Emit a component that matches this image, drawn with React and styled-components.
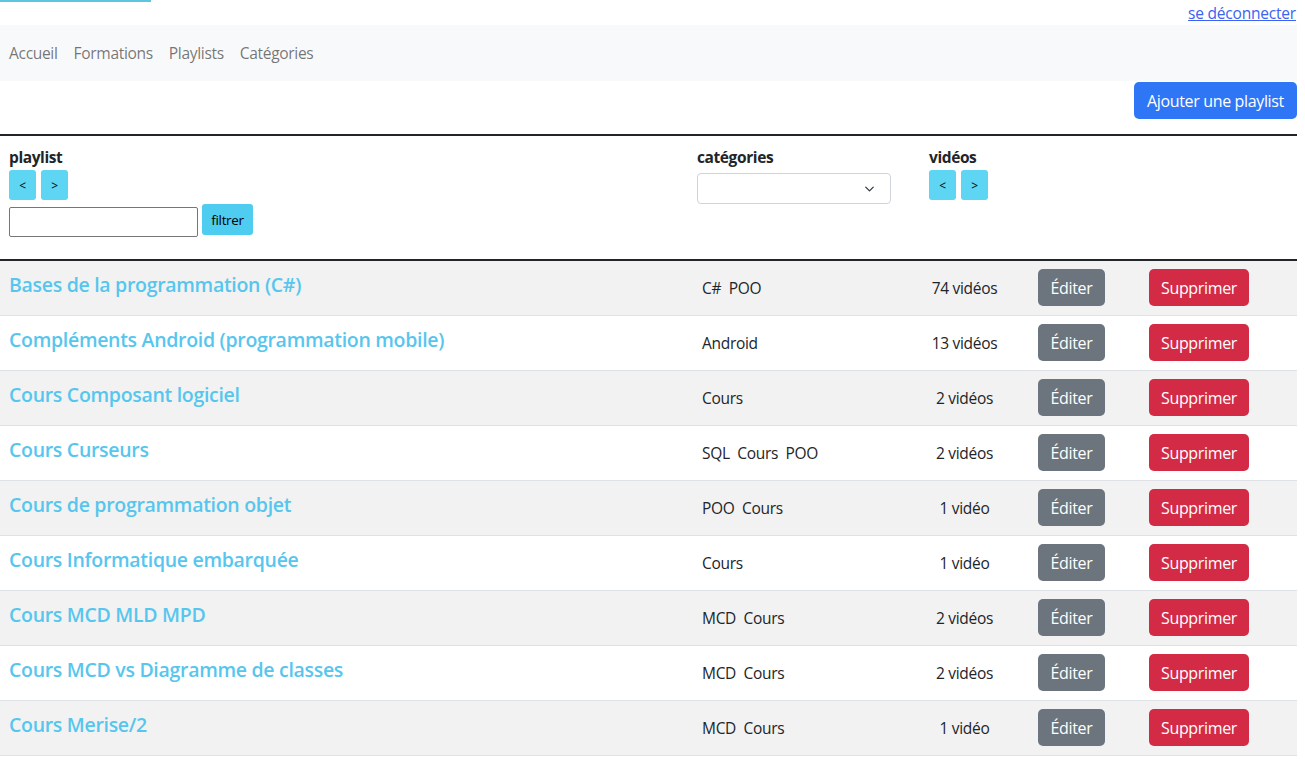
import React from "react";
import styled, { createGlobalStyle } from "styled-components";

const Global = createGlobalStyle`
  html, body { margin: 0; padding: 0; background: #fff; }
  body {
    font-family: "Open Sans", "Noto Sans", "Liberation Sans", sans-serif;
    font-size: 16px;
    line-height: 1.5;
    color: #212529;
  }
  * { box-sizing: border-box; }
`;

const Page = styled.div`
  width: 1297px;
`;

const TopBar = styled.div`
  display: flex;
  justify-content: space-between;
  align-items: flex-start;
  height: 25px;
`;

const LogoEdge = styled.div`
  width: 151px;
  height: 2px;
  background: #5cc6df;
`;

const Logout = styled.a`
  color: #3b63f0;
  text-decoration: underline;
  font-size: 15.5px;
  line-height: 26px;
  margin-right: 1px;
  letter-spacing: -0.2px;
`;

const NavBar = styled.nav`
  display: flex;
  align-items: center;
  height: 56px;
  background: #f8f9fa;
  padding: 0 1px;
`;

const NavLink = styled.a`
  color: rgba(0, 0, 0, 0.55);
  font-size: 15.6px;
  line-height: 26px;
  padding: 8px 8px;
  letter-spacing: -0.35px;
  text-decoration: none;
`;

const ActionBar = styled.div`
  display: flex;
  justify-content: flex-end;
  padding-top: 1px;
  margin-bottom: 15px;
`;

const Btn = styled.button`
  border: none;
  font-family: inherit;
  color: ${(p) => p.$fg || "#fff"};
  background: ${(p) => p.$bg};
  border-radius: ${(p) => p.$radius || 5}px;
  font-size: ${(p) => p.$size || 16}px;
  height: ${(p) => p.$h || 37}px;
  width: ${(p) => p.$w}px;
  padding: 0;
  letter-spacing: -0.35px;
  display: inline-flex;
  align-items: center;
  justify-content: center;
  flex-shrink: 0;
`;

const Table = styled.div`
  border-top: 2px solid #212529;
`;

const Row = styled.div`
  display: grid;
  grid-template-columns: 689px 232px 109px 111px 156px;
  background: ${(p) => (p.$striped ? "#f2f2f2" : "#fff")};
  border-bottom: ${(p) => (p.$head ? "2px solid #212529" : "1px solid #dee2e6")};
  height: ${(p) => (p.$head ? 125 : 55)}px;
`;

const HeadCell = styled.div`
  padding: 8px ${(p) => p.$pad || 9}px;
`;

const HeadLabel = styled.div`
  font-weight: 700;
  font-size: 15.5px;
  line-height: 26px;
  letter-spacing: -0.4px;
`;

const ArrowGroup = styled.div`
  display: flex;
  gap: 5px;
  height: 30px;
`;

const FilterRow = styled.div`
  display: flex;
  align-items: flex-start;
  gap: 4px;
  margin-top: 4px;
`;

const TextInput = styled.input`
  width: 189px;
  height: 30px;
  margin-top: 3px;
  border: 1px solid #767676;
  border-radius: 2px;
  font: inherit;
`;

const Select = styled.div`
  position: relative;
  width: 194px;
  height: 31px;
  margin-top: 3px;
  border: 1px solid #ced4da;
  border-radius: 4px;
  background: #fff;
  svg { position: absolute; right: 14px; top: 10px; }
`;

const Cell = styled.div`
  display: flex;
  align-items: ${(p) => (p.$top ? "flex-start" : "center")};
  padding: ${(p) => (p.$top ? "8px 8px 0" : "2px 8px 0")};
  justify-content: ${(p) => p.$justify || "flex-start"};
`;

const TitleCell = styled.div`
  padding: 10px 9px 0;
`;

const Title = styled.a`
  color: #56c6ee;
  font-size: 19.5px;
  font-weight: 600;
  line-height: 28px;
  letter-spacing: -0.3px;
  text-decoration: none;
`;

const CatText = styled.span`
  font-size: 15.5px;
  padding-left: 5px;
  white-space: pre;
  letter-spacing: -0.3px;
`;

const CountText = styled.span`
  font-size: 15.5px;
  letter-spacing: -0.3px;
  margin-right: 22px;
`;

const Chevron = () => (
  <svg width="13" height="10" viewBox="0 0 16 16">
    <path d="M2 5l6 6 6-6" fill="none" stroke="#343a40" strokeWidth="2" strokeLinecap="round" strokeLinejoin="round" />
  </svg>
);

const Arrows = () => (
  <ArrowGroup>
    <Btn $bg="#5dd5f3" $fg="#000" $w={27} $h={30} $radius={3} $size={12}>&lt;</Btn>
    <Btn $bg="#5dd5f3" $fg="#000" $w={27} $h={30} $radius={3} $size={12}>&gt;</Btn>
  </ArrowGroup>
);

const rows = [
  ["Bases de la programmation (C#)", "C#  POO", "74 vidéos"],
  ["Compléments Android (programmation mobile)", "Android", "13 vidéos"],
  ["Cours Composant logiciel", "Cours", "2 vidéos"],
  ["Cours Curseurs", "SQL  Cours  POO", "2 vidéos"],
  ["Cours de programmation objet", "POO  Cours", "1 vidéo"],
  ["Cours Informatique embarquée", "Cours", "1 vidéo"],
  ["Cours MCD MLD MPD", "MCD  Cours", "2 vidéos"],
  ["Cours MCD vs Diagramme de classes", "MCD  Cours", "2 vidéos"],
  ["Cours Merise/2", "MCD  Cours", "1 vidéo"],
];

export default function App() {
  return (
    <Page>
      <Global />
      <TopBar>
        <LogoEdge />
        <Logout href="#">se déconnecter</Logout>
      </TopBar>
      <NavBar>
        <NavLink href="#">Accueil</NavLink>
        <NavLink href="#">Formations</NavLink>
        <NavLink href="#">Playlists</NavLink>
        <NavLink href="#">Catégories</NavLink>
      </NavBar>
      <ActionBar>
        <Btn $bg="#2f76f7" $w={163} $h={37} $size={16}>Ajouter une playlist</Btn>
      </ActionBar>
      <Table>
        <Row $head>
          <HeadCell>
            <HeadLabel>playlist</HeadLabel>
            <Arrows />
            <FilterRow>
              <TextInput />
              <Btn $bg="#4fcdf0" $fg="#000" $w={51} $h={31} $radius={3} $size={13.5}>filtrer</Btn>
            </FilterRow>
          </HeadCell>
          <HeadCell $pad={8}>
            <HeadLabel>catégories</HeadLabel>
            <Select><Chevron /></Select>
          </HeadCell>
          <HeadCell $pad={8}>
            <HeadLabel>vidéos</HeadLabel>
            <Arrows />
          </HeadCell>
          <HeadCell />
          <HeadCell />
        </Row>
        {rows.map(([t, c, n], i) => (
          <Row key={t} $striped={i % 2 === 0}>
            <TitleCell><Title href="#">{t}</Title></TitleCell>
            <Cell><CatText>{c}</CatText></Cell>
            <Cell $justify="center"><CountText>{n}</CountText></Cell>
            <Cell $top>
              <Btn $bg="#6c757d" $w={67}>Éditer</Btn>
            </Cell>
            <Cell $top>
              <Btn $bg="#d32b46" $w={100}>Supprimer</Btn>
            </Cell>
          </Row>
        ))}
      </Table>
    </Page>
  );
}
